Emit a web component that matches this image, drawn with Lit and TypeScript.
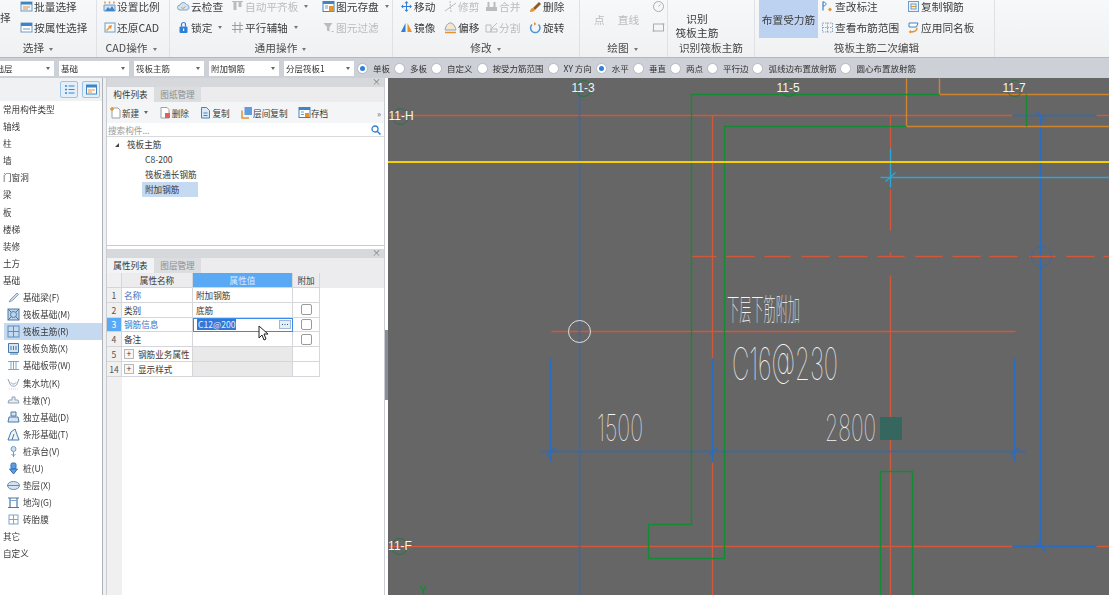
import { LitElement, css, html, svg } from "lit";
import { customElement } from "lit/decorators.js";

const FONT = css`"Noto Sans CJK SC", "Liberation Sans", sans-serif`;

// all ribbon and list icons sit on a 13x13 box
const ic = (body: unknown) => html`<svg class="ic" viewBox="0 0 13 13" width="13" height="13" fill="none">${body}</svg>`;

const BLUE = "#3f83c9";
const ORANGE = "#e8922c";
const GREY = "#b9bcc0";
const LINE = "#6f9cc4";

const icons = {
  batch: ic(svg`<rect x="1" y="2" width="11" height="9" fill="#eef4fb" stroke="${LINE}"/><rect x="1" y="2" width="11" height="2.5" fill="${BLUE}"/><path d="M3 7h7M3 9h5" stroke="${ORANGE}"/>`),
  attr: ic(svg`<rect x="1" y="2" width="11" height="9" fill="#fff" stroke="${LINE}"/><rect x="1" y="2" width="11" height="3" fill="${BLUE}"/><path d="M3 8h7" stroke="${LINE}"/>`),
  scale: ic(svg`<path d="M1 11V5h11v6z" fill="#cfe3f6" stroke="${LINE}"/><path d="M2 11l3-4 2 2 2-3 3 5z" fill="${BLUE}"/><path d="M2 1.500v2M6.500 1.500v2M11 1.500v2" stroke="${ORANGE}" stroke-width="1.500"/>`),
  restore: ic(svg`<rect x="2" y="2" width="10" height="9" fill="#f6f9fc" stroke="${LINE}"/><path d="M9 4L5 5l1 1-3 3 1 1 3-3 1 1z" fill="${ORANGE}"/>`),
  cloud: ic(svg`<path d="M3 10a2.500 2.500 0 0 1 0-5 3.500 3.500 0 0 1 6.500-.5A2.800 2.800 0 0 1 10 10z" fill="#d5e4f2" stroke="#7ea6cb"/><path d="M4.500 7.500l1.500 1 2.500-2" stroke="${ORANGE}"/>`),
  lock: ic(svg`<rect x="2.500" y="5.500" width="8" height="6.500" rx="1" fill="#2f7fd6"/><path d="M4.500 5.500V3.500a2 2 0 0 1 4 0v2" stroke="#2f7fd6" stroke-width="1.200"/><rect x="6" y="7.500" width="1.200" height="2.500" fill="#fff"/>`),
  align: ic(svg`<path d="M1 1.500h11" stroke="${GREY}"/><rect x="2.500" y="2" width="3" height="8" fill="${GREY}"/><rect x="7.500" y="2" width="3" height="5" fill="${GREY}"/>`),
  axis: ic(svg`<path d="M4 1v11M9 1v11M1 4.500h11M1 8.500h11" stroke="#9a9ea4"/>`),
  save: ic(svg`<rect x="1" y="1.500" width="11" height="10" fill="#fff" stroke="${BLUE}"/><rect x="1" y="1.500" width="11" height="2.500" fill="${BLUE}"/><path d="M3 6h3M3 8h3" stroke="${LINE}"/><rect x="7" y="6" width="5" height="5.500" fill="${ORANGE}"/>`),
  filter: ic(svg`<path d="M1.500 2h9L7.500 6v4.500L5 9.500V6z" fill="${GREY}"/><path d="M9.500 10.500h2" stroke="${GREY}"/>`),
  move: ic(svg`<path d="M6.500 1l2 2.200h-4zM6.500 12l2-2.200h-4zM1 6.500l2.200-2v4zM12 6.500l-2.200-2v4z" fill="#2f7fd6"/><path d="M6.500 3v7M3 6.500h7" stroke="#2f7fd6"/>`),
  mirror: ic(svg`<path d="M5.500 2v9H1z" fill="#2f7fd6"/><path d="M7.500 2v9H12z" fill="${ORANGE}"/>`),
  trim: ic(svg`<path d="M1 11L12 3" stroke="${GREY}"/><path d="M6 1l1 11" stroke="${GREY}" stroke-dasharray="2 1"/>`),
  offset: ic(svg`<path d="M1 9c1-5 3-7 5.500-7S11 5 12 9z" fill="#f7e6c8" stroke="#7ea6cb"/><path d="M1 11.500h11" stroke="${ORANGE}" stroke-width="1.500"/>`),
  merge: ic(svg`<rect x="1" y="7" width="11" height="4" fill="${GREY}"/><rect x="2.500" y="2" width="2" height="5" fill="${GREY}"/><rect x="8.500" y="2" width="2" height="5" fill="${GREY}"/>`),
  split: ic(svg`<path d="M1 4h5v7H1zM6 8h6v3H6z" stroke="${GREY}"/><path d="M7 7l5-5" stroke="${GREY}"/>`),
  erase: ic(svg`<path d="M4 8l6-6 2 2-6 6z" fill="#8a5a2b"/><path d="M1 12c0-2 1-4 3-4l2 2c0 1-3 2-5 2z" fill="${ORANGE}"/>`),
  rotate: ic(svg`<path d="M3 3.500a4.700 4.700 0 1 0 6.500 0" stroke="#4b95dc" stroke-width="1.500"/><path d="M5 1l2.500 2L5 4.500z" fill="${ORANGE}"/>`),
  circle: ic(svg`<circle cx="6.500" cy="6.500" r="5" stroke="#a9adb2"/><path d="M6.500 6.500l2-2" stroke="#a9adb2"/>`),
  rect: ic(svg`<rect x="1.500" y="3" width="10" height="7" stroke="#a9adb2"/><path d="M.5 10h2M10.500 3h2" stroke="#a9adb2"/>`),
  mark: ic(svg`<path d="M2 1.500v9" stroke="${BLUE}" stroke-width="1.200"/><path d="M2 2c4 0 4 4 0 4" stroke="${BLUE}"/><path d="M7 9.500l2-2 2 2-2 2z" fill="${ORANGE}"/>`),
  range: ic(svg`<rect x="1.500" y="2" width="10" height="9" stroke="#8aa4bd" stroke-dasharray="1.500 1"/><path d="M6.500 2v9M1.500 6.500h10" stroke="#8aa4bd" stroke-dasharray="1.500 1"/>`),
  copyBar: ic(svg`<rect x="1.500" y="1.500" width="10" height="10" fill="#edf3f9" stroke="${LINE}"/><rect x="4" y="4" width="5" height="5" stroke="${LINE}"/><path d="M4 6.500h5" stroke="${ORANGE}"/>`),
  sameName: ic(svg`<path d="M2 2h9l-1.500 4H2z" fill="#fff" stroke="${BLUE}"/><path d="M10 7c0 3-3 4-7 4" stroke="${ORANGE}" stroke-width="1.500"/><path d="M4 9l-2.500 2L4 12.500z" fill="${ORANGE}"/>`),
  beam: ic(svg`<path d="M2 11l2-3 6-6 1.500 1.500-6 6z" fill="#cfd9e6" stroke="#8aa2bd"/>`),
  raft: ic(svg`<rect x="1" y="1" width="11" height="11" fill="#bcd3ea" stroke="#4a7ba8"/><circle cx="6.500" cy="6.500" r="3" stroke="#4a7ba8"/><path d="M1 1l3 3M12 1L9 4M1 12l3-3M12 12L9 9" stroke="#4a7ba8"/>`),
  main: ic(svg`<rect x="1" y="1" width="11" height="11" stroke="#5f8fb8"/><path d="M6.500 1v11M1 6.500h11" stroke="#5f8fb8"/>`),
  neg: ic(svg`<path d="M1.500 1.500h10v9h-10z" fill="#d6e4f2" stroke="#4a7ba8"/><path d="M4 4v4M6.500 4v4M9 4v4M3 12h8" stroke="#4a7ba8"/>`),
  strip: ic(svg`<path d="M1 2.500h11M1 10.500h11" stroke="#7ea6cb"/><path d="M4 2.500v8M6.500 2.500v8M9 2.500v8" stroke="#7ea6cb"/>`),
  pit: ic(svg`<path d="M1 2l2 5c1 3 6 3 7 0l2-5" stroke="#8fa3b5"/><path d="M4 5.500c1 2 4 2 5 0" stroke="#8fa3b5"/><path d="M2 12h9" stroke="#c7d0d8" stroke-dasharray="1 1"/>`),
  pier: ic(svg`<path d="M5 3h3v3h3l1 3H1l1-3h3z" fill="#e5ebf1" stroke="#8fa3b5"/>`),
  solo: ic(svg`<path d="M4 1h5v4H4zM2 6h9l1 5H1z" fill="#d6e4f2" stroke="#4a7ba8"/>`),
  bar: ic(svg`<path d="M1 12l3-8 4-3 4 11z" fill="#eef3f8" stroke="#4a7ba8"/><path d="M5 12l2-6" stroke="#4a7ba8"/>`),
  cap: ic(svg`<circle cx="6.500" cy="4" r="2.500" fill="#cfe0f0" stroke="#6f9cc4"/><path d="M6.500 6.500V12M4.500 9l2 2 2-2" stroke="#6f9cc4"/>`),
  pile: ic(svg`<rect x="4" y="1" width="5" height="6" rx="1.500" fill="#5f9ce0" stroke="#2f6fb5"/><path d="M2.500 7h8L6.500 12z" fill="#5f9ce0" stroke="#2f6fb5"/>`),
  cushion: ic(svg`<ellipse cx="6.500" cy="6.500" rx="6" ry="4" fill="#d6e4f2" stroke="#5f8fb8"/><path d="M.5 6.500h12" stroke="#5f8fb8"/>`),
  ditch: ic(svg`<path d="M1 2h11M3 2v9M10 2v9M1 11.500h11" stroke="#4a7ba8" stroke-width="1.200"/><path d="M3 4.500h7" stroke="#7ea6cb"/>`),
  brick: ic(svg`<rect x="2" y="2" width="9" height="9" stroke="#7ea6cb"/><path d="M6.500 2v9M2 6.500h9" stroke="#7ea6cb"/>`),
  add: ic(svg`<path d="M3 2h6l2 2v8H3z" fill="#fff" stroke="#9aa0a6"/><path d="M1 3h4M3 1v4" stroke="${ORANGE}" stroke-width="1.300"/>`),
  del: ic(svg`<path d="M2 1.500h6l2 2V12H2z" fill="#fff" stroke="#9aa0a6"/><rect x="6" y="7" width="5" height="5" fill="#e0605a"/>`),
  copy: ic(svg`<path d="M2.500 1.500h5l3 3V12h-8z" fill="#dbe8f5" stroke="${BLUE}"/><path d="M4.500 7h4M4.500 9.500h4" stroke="${BLUE}"/>`),
  floor: ic(svg`<rect x="4.500" y="1" width="7.500" height="8" fill="#5f9ce0"/><path d="M2 4.500V12h7" stroke="${ORANGE}" stroke-width="1.500"/>`),
  archive: ic(svg`<rect x="1" y="1.500" width="11" height="10" fill="#fff" stroke="${BLUE}"/><rect x="1" y="1.500" width="11" height="2.500" fill="${BLUE}"/><rect x="7" y="7" width="4" height="4" fill="${ORANGE}"/><path d="M3 6h3M3 8.500h3" stroke="${LINE}"/>`),
};

const item = (icon: unknown, label: string, opts: { off?: boolean; caret?: boolean } = {}) => html`
  <div class="item ${opts.off ? "off" : ""}">${icon}<span>${label}</span>${opts.caret ? html`<i class="caret"></i>` : ""}</div>
`;

@customElement("ribbon-bar")
export class RibbonBar extends LitElement {
  render() {
    return html`
      <section class="group g-select">
        <div class="body">
          <div class="clip">择</div>
          <div class="col">${item(icons.batch, "批量选择")}${item(icons.attr, "按属性选择")}</div>
        </div>
        <div class="label">选择<i class="caret"></i></div>
      </section>
      <section class="group g-cad">
        <div class="body">
          <div class="col">${item(icons.scale, "设置比例")}${item(icons.restore, "还原CAD")}</div>
        </div>
        <div class="label">CAD操作<i class="caret"></i></div>
      </section>
      <section class="group g-common">
        <div class="body">
          <div class="col w54">${item(icons.cloud, "云检查")}${item(icons.lock, "锁定", { caret: true })}</div>
          <div class="col w91">${item(icons.align, "自动平齐板", { off: true, caret: true })}${item(icons.axis, "平行辅轴", { caret: true })}</div>
          <div class="col">${item(icons.save, "图元存盘", { caret: true })}${item(icons.filter, "图元过滤", { off: true })}</div>
        </div>
        <div class="label">通用操作<i class="caret"></i></div>
      </section>
      <section class="group g-edit">
        <div class="body">
          <div class="col w44">${item(icons.move, "移动")}${item(icons.mirror, "镜像")}</div>
          <div class="col w41">${item(icons.trim, "修剪", { off: true })}${item(icons.offset, "偏移")}</div>
          <div class="col w44">${item(icons.merge, "合并", { off: true })}${item(icons.split, "分割", { off: true })}</div>
          <div class="col">${item(icons.erase, "删除")}${item(icons.rotate, "旋转")}</div>
        </div>
        <div class="label">修改<i class="caret"></i></div>
      </section>
      <section class="group g-draw">
        <div class="body">
          <div class="big off">点</div>
          <div class="big off">直线</div>
          <div class="col">${item(icons.circle, "")}${item(icons.rect, "")}</div>
        </div>
        <div class="label">绘图<i class="caret"></i></div>
      </section>
      <section class="group g-recog">
        <div class="body"><div class="big stacked">识别<br />筏板主筋</div></div>
        <div class="label">识别筏板主筋</div>
      </section>
      <section class="group g-rebar">
        <div class="body">
          <div class="big active">布置受力筋</div>
          <div class="col w86">${item(icons.mark, "查改标注")}${item(icons.range, "查看布筋范围")}</div>
          <div class="col">${item(icons.copyBar, "复制钢筋")}${item(icons.sameName, "应用同名板")}</div>
        </div>
        <div class="label">筏板主筋二次编辑</div>
      </section>
    `;
  }

  static styles = css`
    :host {
      display: flex;
      height: 58px;
      overflow: hidden;
      box-sizing: border-box;
      background: linear-gradient(#f7f8f9, #eff1f3);
      border-bottom: 1px solid #b4b8be;
      font-family: ${FONT};
      font-size: 10.7px;
      color: #3c3c3c;
      filter: blur(0.3px);
    }
    .group {
      flex: none;
      margin-top: -4px;
      box-sizing: border-box;
      border-right: 1px solid #dfe1e4;
      display: flex;
      flex-direction: column;
    }
    .body {
      display: flex;
      height: 42px;
    }
    .label {
      height: 19px;
      line-height: 19px;
      text-align: center;
      color: #4a4a4a;
    }
    .col {
      display: flex;
      flex-direction: column;
    }
    .w54 { width: 54px; }
    .w91 { width: 91px; }
    .w44 { width: 44px; }
    .w41 { width: 41px; }
    .w86 { width: 86px; }
    .item {
      height: 21px;
      display: flex;
      align-items: center;
      gap: 1px;
      white-space: nowrap;
    }
    .off { color: #b9bcc0; }
    .ic { flex: none; display: block; }
    .caret {
      display: inline-block;
      margin-left: 5px;
      border: 2.5px solid transparent;
      border-top: 3px solid #777;
      border-bottom: 0;
      vertical-align: middle;
    }
    .clip {
      width: 20px;
      padding-top: 15px;
      line-height: 14px;
    }
    .big {
      display: flex;
      align-items: center;
      text-align: center;
      padding-top: 4px;
      box-sizing: border-box;
      white-space: nowrap;
    }
    .stacked {
      width: 100%;
      justify-content: center;
      line-height: 14px;
      padding: 18px 28px 0 0;
    }
    .active {
      width: 59px;
      margin-right: 3px;
      background: #bcd2f0;
      justify-content: center;
    }
    .g-select { width: 97px; }
    .g-select .label { padding-right: 20px; }
    .g-cad { width: 73px; padding-left: 6px; }
    .g-cad .label { padding-right: 10px; }
    .g-common { width: 223px; padding-left: 7px; }
    .g-common .label { padding-right: 8px; }
    .g-edit { width: 187px; padding-left: 7px; }
    .g-edit .label { padding-right: 8px; }
    .g-draw { width: 88px; padding-left: 14px; }
    .g-draw .body { gap: 13px; }
    .g-draw .label { padding-right: 16px; }
    .g-recog { width: 87px; }
    .g-rebar { width: 240px; padding-left: 4px; }
  `;
}

const SELECTS = ["基础", "筏板主筋", "附加钢筋", "分层筏板1"];
const RADIOS = [
  ["单板", true], ["多板", false], ["自定义", false], ["按受力筋范围", false], ["XY 方向", false], ["水平", true],
  ["垂直", false], ["两点", false], ["平行边", false], ["弧线边布置放射筋", false], ["圆心布置放射筋", false],
] as [string, boolean][];

@customElement("option-bar")
export class OptionBar extends LitElement {
  render() {
    return html`
      <div class="select first"><span class="cut">基础层</span><i class="caret"></i></div>
      ${SELECTS.map((s) => html`<div class="select"><span>${s}</span><i class="caret"></i></div>`)}
      <div class="radios">
        ${RADIOS.map(([label, on]) => html`<label class="radio"><i class="dot ${on ? "on" : ""}"></i>${label}</label>`)}
      </div>
    `;
  }

  static styles = css`
    :host {
      display: flex;
      align-items: center;
      gap: 5px;
      height: 20px;
      background: #cdd0d6;
      font-family: ${FONT};
      font-size: 8.5px;
      color: #333;
      white-space: nowrap;
      filter: blur(0.3px);
    }
    .select {
      width: 70px;
      height: 15px;
      box-sizing: border-box;
      background: #fff;
      padding-left: 2px;
      display: flex;
      align-items: center;
      justify-content: space-between;
      overflow: hidden;
    }
    .first {
      width: 54px;
      padding-left: 0;
    }
    .cut { margin-left: -13px; }
    .caret {
      flex: none;
      margin-right: 4px;
      border: 2px solid transparent;
      border-top: 3px solid #666;
      border-bottom: 0;
    }
    .radios {
      display: flex;
      gap: 4px;
      margin-left: -2px;
    }
    .radio {
      display: flex;
      align-items: center;
      gap: 5px;
    }
    .dot {
      width: 11px;
      height: 11px;
      box-sizing: border-box;
      border-radius: 50%;
      background: #fff;
      border: 1px solid #b5bac2;
      display: flex;
      align-items: center;
      justify-content: center;
    }
    .dot.on::after {
      content: "";
      width: 5px;
      height: 5px;
      border-radius: 50%;
      background: #2f7fd6;
    }
  `;
}

const TYPES = ["常用构件类型", "轴线", "柱", "墙", "门窗洞", "梁", "板", "楼梯", "装修", "土方", "基础"];
const FOUNDATION = [
  ["beam", "基础梁(F)"], ["raft", "筏板基础(M)"], ["main", "筏板主筋(R)"], ["neg", "筏板负筋(X)"], ["strip", "基础板带(W)"],
  ["pit", "集水坑(K)"], ["pier", "柱墩(Y)"], ["solo", "独立基础(D)"], ["bar", "条形基础(T)"], ["cap", "桩承台(V)"],
  ["pile", "桩(U)"], ["cushion", "垫层(X)"], ["ditch", "地沟(G)"], ["brick", "砖胎膜"],
] as [keyof typeof icons, string][];

@customElement("type-panel")
export class TypePanel extends LitElement {
  render() {
    return html`
      <div class="head">
        <button>${ic(svg`<path d="M2 3h2M2 6.500h2M2 10h2" stroke="#3f83c9" stroke-width="1.500"/><path d="M5.500 3h6M5.500 6.500h6M5.500 10h6" stroke="#3f83c9"/>`)}</button>
        <button>${ic(svg`<rect x="1.500" y="2" width="10" height="9" fill="#fff" stroke="#3f83c9"/><rect x="1.500" y="2" width="10" height="2.500" fill="#3f83c9"/><path d="M3 7h7M3 9h4" stroke="#e8922c"/>`)}</button>
      </div>
      ${TYPES.map((t) => html`<div class="row">${t}</div>`)}
      ${FOUNDATION.map(([icon, t], i) => html`<div class="row sub ${i === 2 ? "sel" : ""}">${icons[icon]}<span>${t}</span></div>`)}
      <div class="row">其它</div>
      <div class="row">自定义</div>
    `;
  }

  static styles = css`
    :host {
      display: block;
      box-sizing: border-box;
      background: #fff;
      border-right: 1px solid #aeb2b8;
      font-family: ${FONT};
      font-size: 8.6px;
      color: #3a3a3a;
      filter: blur(0.3px);
    }
    .head {
      height: 23px;
      box-sizing: border-box;
      background: #f0f1f2;
      display: flex;
      justify-content: flex-end;
      align-items: flex-start;
      gap: 4px;
      padding: 3px 2px 0 0;
    }
    button {
      width: 18px;
      height: 17px;
      padding: 1px 2px;
      box-sizing: border-box;
      background: #e3f0fb;
      border: 1px solid #9cc4e6;
      border-radius: 2px;
    }
    .row {
      height: 17.1px;
      line-height: 17.1px;
      padding-left: 3px;
      white-space: nowrap;
    }
    .sub {
      display: flex;
      align-items: center;
      gap: 3px;
      margin-left: 4px;
      padding-left: 3px;
    }
    .sel { background: #c5d9f1; }
    .ic { flex: none; }
  `;
}

const ROWS = [
  { n: "1", name: "名称", value: "附加钢筋", blue: true, check: false },
  { n: "2", name: "类别", value: "底筋", blue: false, check: true },
  { n: "3", name: "钢筋信息", value: "", blue: true, check: true, edit: true },
  { n: "4", name: "备注", value: "", blue: false, check: true },
];

@customElement("component-panel")
export class ComponentPanel extends LitElement {
  render() {
    return html`
      <div class="strip"><span class="close">×</span></div>
      <div class="tabs"><span class="tab on">构件列表</span><span class="tab">图纸管理</span></div>
      <div class="tools">
        <span class="tool">${icons.add}新建<i class="caret"></i></span>
        <span class="tool">${icons.del}删除</span>
        <span class="tool">${icons.copy}复制</span>
        <span class="tool">${icons.floor}层间复制</span>
        <span class="tool">${icons.archive}存档</span>
        <span class="more">»</span>
      </div>
      <div class="search">
        <span>搜索构件...</span>
        <svg viewBox="0 0 10 10" width="10" height="10" fill="none"><circle cx="4" cy="4" r="3" stroke="#2f7fd6" stroke-width="1.300"/><path d="M6.500 6.500L9.500 9.500" stroke="#2f7fd6" stroke-width="1.500"/></svg>
      </div>
      <div class="tree">
        <div class="node root"><i class="tri"></i>筏板主筋</div>
        <div class="node leaf">C8-200</div>
        <div class="node leaf">筏板通长钢筋</div>
        <div class="node leaf"><span class="picked">附加钢筋</span></div>
      </div>
      <div class="divider"></div>
      <div class="strip"><span class="close">×</span></div>
      <div class="tabs"><span class="tab on">属性列表</span><span class="tab">图层管理</span></div>
      <div class="table">
        <div class="tr th">
          <div class="c num"></div><div class="c name mid">属性名称</div><div class="c val mid hot">属性值</div><div class="c plus mid">附加</div>
        </div>
        ${ROWS.map((r) => html`
          <div class="tr">
            <div class="c num ${r.edit ? "numhot" : ""}">${r.n}</div>
            <div class="c name ${r.blue ? "link" : ""}">${r.name}</div>
            <div class="c val ${r.edit ? "editing" : ""}">
              ${r.edit
                ? html`<span class="selected">C12@200</span>
                    <svg class="dots" viewBox="0 0 12 9" width="12" height="9"><rect x=".5" y=".5" width="11" height="8" fill="#e6edf5" stroke="#9db9d6"/><path d="M3 4.500h1M5.500 4.500h1M8 4.500h1" stroke="#3a5a80"/></svg>`
                : r.value}
            </div>
            <div class="c plus">${r.check ? html`<i class="check"></i>` : ""}</div>
          </div>
        `)}
        <div class="tr">
          <div class="c num">5</div><div class="c name"><i class="exp">+</i>钢筋业务属性</div><div class="c val shade"></div><div class="c plus"></div>
        </div>
        <div class="tr">
          <div class="c num">14</div><div class="c name"><i class="exp">+</i>显示样式</div><div class="c val shade"></div><div class="c plus"></div>
        </div>
        <div class="rest"></div>
        <svg class="cursor" viewBox="0 0 10 16" width="10" height="16"><path d="M1 1v12l3-3 2 5 2-1-2-5h4z" fill="#fff" stroke="#222" stroke-width="1"/></svg>
      </div>
    `;
  }

  static styles = css`
    :host {
      display: flex;
      flex-direction: column;
      box-sizing: border-box;
      background: #fff;
      font-family: ${FONT};
      font-size: 8.6px;
      color: #3a3a3a;
      height: 517px;
      border-left: 1px solid #c9ccd0;
      border-right: 1px solid #c9ccd0;
      filter: blur(0.3px);
    }
    .strip {
      height: 9px;
      flex: none;
      background: #d6d8db;
      position: relative;
    }
    .close {
      position: absolute;
      right: 3px;
      top: -3px;
      font-size: 9px;
      color: #777;
    }
    .tabs {
      height: 15px;
      flex: none;
      display: flex;
      background: #ececee;
    }
    .tab {
      width: 47px;
      text-align: center;
      line-height: 15px;
      background: #dcdddf;
      color: #8d8d8d;
    }
    .tab.on {
      background: #f2f3f4;
      color: #333;
    }
    .tools {
      height: 21px;
      flex: none;
      display: flex;
      align-items: center;
      gap: 10.5px;
      padding-left: 2px;
      background: #f4f5f6;
      white-space: nowrap;
    }
    .tool {
      display: flex;
      align-items: center;
    }
    .caret {
      margin-left: 5px;
      border: 2px solid transparent;
      border-top: 3px solid #666;
      border-bottom: 0;
    }
    .more {
      margin-left: auto;
      margin-right: 3px;
      color: #666;
    }
    .search {
      height: 14px;
      flex: none;
      display: flex;
      align-items: center;
      justify-content: space-between;
      padding: 0 3px 0 1px;
      color: #9a9a9a;
      border-bottom: 1px solid #d8dade;
      box-sizing: border-box;
    }
    .tree {
      height: 108px;
      flex: none;
      border-bottom: 1px solid #c9ccd0;
    }
    .node {
      height: 15px;
      line-height: 15px;
      white-space: nowrap;
    }
    .root {
      display: flex;
      align-items: center;
      padding-left: 8px;
      gap: 8px;
    }
    .tri {
      border-left: 4px solid transparent;
      border-bottom: 4px solid #444;
    }
    .leaf { padding-left: 38px; }
    .picked {
      display: inline-block;
      width: 56px;
      margin-left: -3px;
      padding-left: 3px;
      box-sizing: border-box;
      background: #c5d9f1;
    }
    .divider {
      height: 3px;
      flex: none;
      background: #fff;
    }
    .table {
      flex: 1;
      display: flex;
      flex-direction: column;
      position: relative;
    }
    .tr {
      display: flex;
      height: 14.8px;
      flex: none;
    }
    .th {
      background: #ececee;
      height: 15px;
    }
    .c {
      box-sizing: border-box;
      height: 100%;
      border-right: 1px solid #d4d6d9;
      border-bottom: 1px solid #d4d6d9;
      display: flex;
      align-items: center;
      white-space: nowrap;
    }
    .num {
      width: 15px;
      flex: none;
      justify-content: center;
      background: #f0f0f1;
      color: #555;
    }
    .name {
      width: 71px;
      flex: none;
      padding-left: 2px;
    }
    .val {
      width: 100px;
      flex: none;
      padding-left: 3px;
    }
    .plus {
      width: 27px;
      flex: none;
      justify-content: center;
    }
    .mid {
      justify-content: center;
      padding: 0;
    }
    .hot {
      background: #5aa9f5;
      color: #dbeafd;
    }
    .numhot {
      background: #5aa9f5;
      color: #fff;
    }
    .link { color: #3a75c4; }
    .editing {
      border: 1.5px solid #3a8be6;
      padding-left: 3px;
      justify-content: space-between;
      padding-right: 1px;
    }
    .selected {
      background: #3377d8;
      color: #e6effb;
      padding: 0 1px;
      line-height: 11px;
    }
    .dots { flex: none; }
    .check {
      width: 9px;
      height: 9px;
      border: 1px solid #9a9a9a;
      border-radius: 2px;
    }
    .exp {
      width: 8px;
      height: 8px;
      margin-right: 4px;
      border: 1px solid #b5b7ba;
      font-style: normal;
      line-height: 7px;
      text-align: center;
      background: #f6f6f6;
    }
    .shade { background: #e9e9ea; }
    .rest {
      flex: 1;
      width: 15px;
      background: #f0f0f1;
    }
    .cursor {
      position: absolute;
      left: 151px;
      top: 52px;
    }
  `;
}

const RED = "#d2583a";
const CAD_BLUE = "#2a6cc0";
const GREEN = "#158a35";
const AMBER = "#d0842e";
const CYAN = "#2fa6d2";

// x1 y1 x2 y2 colour
const SEGMENTS: [number, number, number, number, string][] = [
  [388, 115, 1012, 115, RED], [1012, 115, 1096, 115, CAD_BLUE], [1096, 115, 1109, 115, RED],
  [388, 546, 1012, 546, RED], [1012, 546, 1096, 546, CAD_BLUE], [1096, 546, 1109, 546, RED],
  [551, 331, 1015, 331, RED],
  [712, 115, 712, 358, RED], [712, 358, 712, 462, CAD_BLUE], [712, 462, 712, 595, RED],
  [890, 115, 890, 148, RED], [890, 148, 890, 187, CYAN], [890, 189, 890, 230, RED], [890, 252, 890, 255, RED], [890, 275, 890, 595, RED],
  [579, 90, 579, 595, CAD_BLUE], [1040, 115, 1040, 546, CAD_BLUE],
  [880, 177, 1109, 177, CYAN], [885, 181, 895, 172, CYAN],
  [540, 451, 1025, 451, CAD_BLUE], [550, 358, 550, 461, CAD_BLUE], [1014, 358, 1014, 461, CAD_BLUE],
  [546, 455, 556, 447, CAD_BLUE], [708, 455, 717, 447, CAD_BLUE], [1010, 455, 1019, 447, CAD_BLUE],
  [1036, 111, 1045, 120, CAD_BLUE], [1036, 542, 1045, 551, CAD_BLUE],
  [906, 78, 906, 126, AMBER], [906, 126, 1109, 126, AMBER], [939, 78, 939, 94, AMBER], [939, 94, 1109, 94, AMBER],
  [1026, 94, 1026, 126, GREEN],
];

const DASHES: [number, number][] = [
  [691, 716], [726, 747], [747, 754], [764, 790], [801, 829], [838, 867], [877, 904], [915, 942], [952, 980],
  [989, 1017], [1029, 1055], [1066, 1094], [1103, 1109],
];

const AXES: [string, number, number, number, number][] = [
  ["11-3", 583, 92, 583, 88], ["11-5", 788, 92, 788, 88], ["11-7", 1014, 92, 1014, 88],
  ["11-H", 401, 120, 400, 116], ["11-F", 400, 550, 399, 546],
];

@customElement("cad-canvas")
export class CadCanvas extends LitElement {
  render() {
    return html`
      <svg viewBox="388 78 721 517" width="721" height="517" fill="none">
        <g transform="translate(.5 .5)" stroke-width="1.400">
          ${SEGMENTS.map(([x1, y1, x2, y2, c]) => svg`<line x1=${x1} y1=${y1} x2=${x2} y2=${y2} stroke=${c} />`)}
          ${DASHES.map(([a, b]) => svg`<line x1=${a} y1="256" x2=${b} y2="256" stroke=${RED} />`)}
          <path d="M906 126H724V558H648V524H691V94H939" stroke=${GREEN} />
          <path d="M880 595V471H912V595" stroke=${GREEN} />
          <circle cx="579" cy="331" r="11" stroke="#e2e2e2" stroke-width="1" />
          <circle cx="1041" cy="256" r="10" stroke=${CAD_BLUE} stroke-width="1" />
          ${AXES.map(([, , , cx, cy]) => svg`<circle cx=${cx} cy=${cy} r="8" stroke="#2c7345" stroke-width="1" />`)}
        </g>
        <rect x="388" y="161" width="721" height="2" fill="#f5d000" />
        <rect x="880" y="417" width="22" height="23" fill="#36675f" />
        ${AXES.map(([t, x, y]) => svg`<text class="axis" x=${x} y=${y} text-anchor="middle">${t}</text>`)}
        <text class="cad cn" x="727" y="320" textLength="73" lengthAdjust="spacingAndGlyphs">下层下筋附加</text>
        <text class="cad big" x="732" y="380" textLength="106" lengthAdjust="spacingAndGlyphs">C16@230</text>
        <text class="cad dim" x="597" y="441" textLength="46" lengthAdjust="spacingAndGlyphs">1500</text>
        <text class="cad dim" x="825" y="441" textLength="51" lengthAdjust="spacingAndGlyphs">2800</text>
        <text class="y" x="419" y="594">Y</text>
      </svg>
    `;
  }

  static styles = css`
    :host {
      display: block;
      background: #666666;
      overflow: hidden;
    }
    svg { display: block; }
    .axis {
      font: 12px "Liberation Sans", sans-serif;
      fill: #f4f4f4;
    }
    .cad {
      font-family: Inter, "Noto Sans CJK SC", sans-serif;
      font-weight: 100;
      fill: #f4f4f4;
    }
    .cn { font-size: 30px; }
    .big { font-size: 45px; }
    .dim { font-size: 37px; }
    .y {
      font: 700 11px "Liberation Sans", sans-serif;
      fill: #158a35;
    }
  `;
}

@customElement("app-root")
export class AppRoot extends LitElement {
  render() {
    return html`
      <ribbon-bar></ribbon-bar>
      <option-bar></option-bar>
      <main>
        <type-panel></type-panel>
        <i class="gutter"></i>
        <component-panel></component-panel>
        <div class="splitter"><i class="handle"></i></div>
        <cad-canvas></cad-canvas>
      </main>
    `;
  }

  static styles = css`
    :host {
      display: block;
      width: 1109px;
      height: 595px;
      overflow: hidden;
      background: #fff;
    }
    main {
      display: grid;
      grid-template-columns: 103px 3px 279px 3px 721px;
      height: 517px;
      border-top: 1px solid #9ea2a8;
      margin-top: -1px;
    }
    .gutter { background: #eef0f2; }
    .splitter {
      background: #fff;
      padding-top: 252px;
    }
    .handle {
      display: block;
      height: 70px;
      background: #8a8c96;
    }
  `;
}
